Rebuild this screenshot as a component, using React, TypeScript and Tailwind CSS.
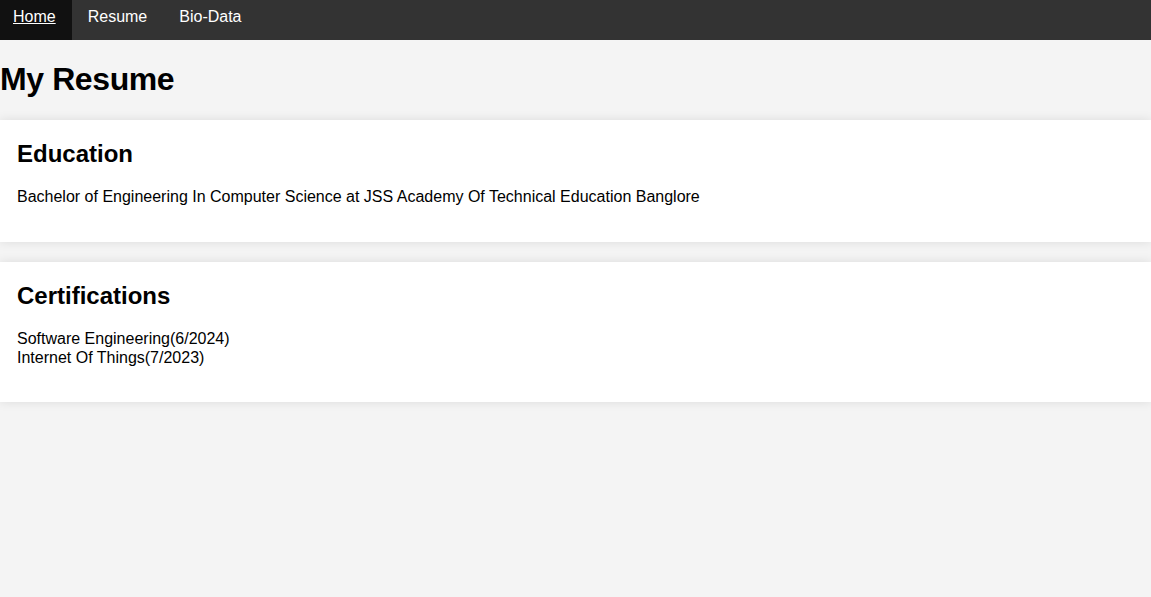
import React from 'react';

const links = [
  { label: 'Home', active: true },
  { label: 'Resume', active: false },
  { label: 'Bio-Data', active: false }
];

const Card: React.FC<{ title: string; children: React.ReactNode }> = ({ title, children }) => (
  <section className="bg-white pl-[17px] pr-4 pt-5 pb-[19px] my-5 shadow-[0_0_10px_rgba(0,0,0,0.1)]">
    <h2 className="text-[24px] leading-[27.6px] font-bold mb-[21px]">{title}</h2>
    <p className="text-base leading-[18.4px] mb-4">{children}</p>
  </section>
);

export default function App() {
  return (
    <div
      className="min-h-screen bg-[#f4f4f4] text-black"
      style={{ fontFamily: '"Liberation Sans", Arial, sans-serif' }}
    >
      {/* Nav */}
      <nav className="bg-[#333] h-10 flex">
        {links.map((link) => (
          <a
            key={link.label}
            href="#"
            className={
              link.active
                ? 'bg-[#111] text-white underline pl-[13px] pr-4 pt-[8px] text-base leading-[18.4px]'
                : 'text-white no-underline px-4 pt-[8px] text-base leading-[18.4px]'
            }
          >
            {link.label}
          </a>
        ))}
      </nav>

      <h1 className="text-[32px] leading-[37px] font-bold tracking-[-0.4px] mt-[21.44px] mb-[21.44px]">My Resume</h1>

      <Card title="Education">
        Bachelor of Engineering In Computer Science at JSS Academy Of Technical Education Banglore
      </Card>

      <Card title="Certifications">
        Software Engineering(6/2024)
        <br />
        Internet Of Things(7/2023)
      </Card>
    </div>
  );
}
